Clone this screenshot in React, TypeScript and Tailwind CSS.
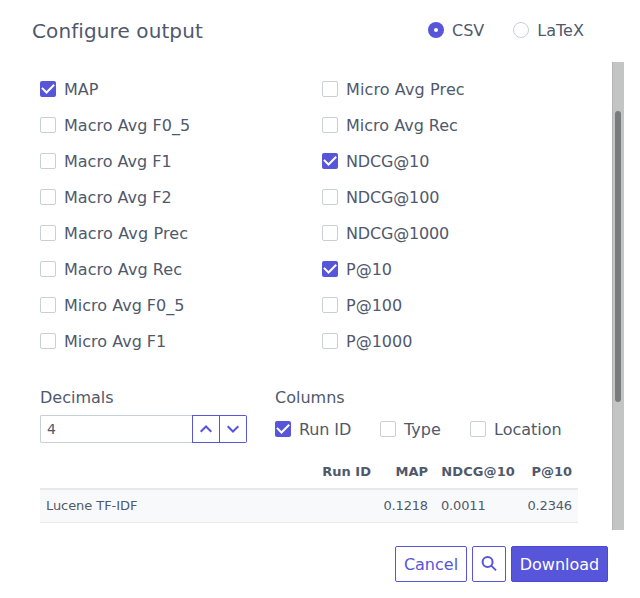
import React from 'react';

type Option = { label: string; checked?: boolean; tracking?: string };

const leftMetrics: Option[] = [
  { label: 'MAP', checked: true },
  { label: 'Macro Avg F0_5', tracking: 'tracking-[0.03px]' },
  { label: 'Macro Avg F1' },
  { label: 'Macro Avg F2' },
  { label: 'Macro Avg Prec', tracking: 'tracking-[0.12px]' },
  { label: 'Macro Avg Rec', tracking: 'tracking-[0.06px]' },
  { label: 'Micro Avg F0_5' },
  { label: 'Micro Avg F1' },
];

const rightMetrics: Option[] = [
  { label: 'Micro Avg Prec', tracking: 'tracking-[0.12px]' },
  { label: 'Micro Avg Rec' },
  { label: 'NDCG@10', checked: true, tracking: 'tracking-[-0.15px]' },
  { label: 'NDCG@100', tracking: 'tracking-[-0.15px]' },
  { label: 'NDCG@1000', tracking: 'tracking-[-0.18px]' },
  { label: 'P@10', checked: true },
  { label: 'P@100' },
  { label: 'P@1000' },
];

function Checkbox({ label, checked, tracking = '' }: Option) {
  return (
    <label className="flex h-6 items-center gap-2 whitespace-nowrap">
      <span
        className={
          checked
            ? 'flex size-4 shrink-0 rounded-[2px] bg-[#5755d9]'
            : 'flex size-4 shrink-0 rounded-[2px] border border-[#caced7] bg-white'
        }
      >
        {checked && (
          <svg className="size-4" viewBox="0 0 16 16" fill="none" stroke="#fff" strokeWidth="2">
            <path d="M1.9 6.9 L6.5 11.5 L14.2 3.8" />
          </svg>
        )}
      </span>
      <span className={`pt-[2px] ${tracking}`}>{label}</span>
    </label>
  );
}

function Radio({ label, checked }: Option) {
  return (
    <label className="flex h-6 items-center gap-2">
      <span
        className={
          checked
            ? 'flex size-4 items-center justify-center rounded-full bg-[#5755d9]'
            : 'flex size-4 rounded-full border border-[#caced7]'
        }
      >
        {checked && <span className="size-1 rounded-full bg-white" />}
      </span>
      <span className="pt-[2px]">{label}</span>
    </label>
  );
}

function Chevron({ d }: { d: string }) {
  return (
    <svg className="size-4" viewBox="0 0 16 16" fill="none" stroke="#5755d9" strokeWidth="2">
      <path d={d} />
    </svg>
  );
}

export default function App() {
  return (
    <div className="flex h-[598px] w-[640px] flex-col bg-white font-['DejaVu_Sans',sans-serif] text-base leading-6 text-[#50596c]">
      <header className="flex h-[62px] shrink-0 items-center pl-8">
        <h1 className="w-[396px] text-xl tracking-[0.1px]">Configure output</h1>
        <div className="flex gap-[29px] pb-[2px]">
          <Radio label="CSV" checked />
          <Radio label="LaTeX" />
        </div>
      </header>

      <div className="flex h-[468px] shrink-0 overflow-hidden">
        <main className="w-[612px] pl-10 pt-[15px]">
          <div className="flex">
            <div className="flex w-[282px] flex-col gap-3">
              {leftMetrics.map((m) => (
                <Checkbox key={m.label} {...m} />
              ))}
            </div>
            <div className="flex flex-col gap-3">
              {rightMetrics.map((m) => (
                <Checkbox key={m.label} {...m} />
              ))}
            </div>
          </div>

          <div className="mt-8 flex">
            <div className="w-[235px]">
              <div className="h-[30px] pt-px">Decimals</div>
              <div className="flex h-7 w-[207px]">
                <div className="flex flex-1 items-center rounded-l-[2px] border border-r-0 border-[#caced7] pl-[6px] text-sm">
                  4
                </div>
                <button className="flex w-7 items-center justify-center border border-[#5755d9]">
                  <Chevron d="M2.7 10.8 L8 5.5 L13.3 10.8" />
                </button>
                <button className="flex w-[27px] items-center justify-center rounded-r-[2px] border border-l-0 border-[#5755d9]">
                  <Chevron d="M2.7 5.2 L8 10.5 L13.3 5.2" />
                </button>
              </div>
            </div>
            <div>
              <div className="h-8 pt-px">Columns</div>
              <div className="flex">
                <div className="w-[105px]"><Checkbox label="Run ID" checked tracking="tracking-[-0.1px]" /></div>
                <div className="w-[90px]"><Checkbox label="Type" /></div>
                <Checkbox label="Location" />
              </div>
            </div>
          </div>

          <table className="mt-[11px] w-[538px] table-fixed border-collapse text-[13px] leading-5">
            <colgroup>
              <col className="w-[337px]" />
              <col className="w-[57px]" />
              <col className="w-[87px]" />
              <col className="w-[57px]" />
            </colgroup>
            <thead>
              <tr className="h-[35px] border-b-2 border-[#e7e9ed] text-right">
                <th className="px-[6px] pt-[2px]">Run ID</th>
                <th className="px-[6px] pt-[2px]">MAP</th>
                <th className="px-[6px] pt-[2px] tracking-[0.1px]">NDCG@10</th>
                <th className="px-[6px] pt-[2px]">P@10</th>
              </tr>
            </thead>
            <tbody>
              <tr className="h-[33px] border-b border-[#e7e9ed] bg-[#f8f9fa]">
                <td className="px-[6px] pt-px tracking-[-0.07px]">Lucene TF-IDF</td>
                <td className="px-[6px] pt-px text-right tracking-[-0.15px]">0.1218</td>
                <td className="px-[7px] pt-px tracking-[-0.15px]">0.0011</td>
                <td className="px-[6px] pt-px text-right tracking-[-0.15px]">0.2346</td>
              </tr>
            </tbody>
          </table>
        </main>
        <div className="w-3 border-l border-[#b2b4b3] bg-[#c3c5c4] pl-[2px] pt-[49px]">
          <div className="h-[291px] w-[6px] rounded-full bg-[#787c7d]" />
        </div>
      </div>

      <footer className="flex flex-1 items-start justify-end gap-[5px] pr-8 pt-4">
        <button className="h-9 w-[72px] rounded-[2px] border border-[#5755d9] pt-[2px] text-[#5755d9]">Cancel</button>
        <button className="flex h-9 w-[34px] items-center justify-center rounded-[2px] border border-[#5755d9]">
          <svg className="size-4" viewBox="0 0 16 16" fill="none" stroke="#5755d9" strokeWidth="2">
            <circle cx="6.6" cy="6" r="5" />
            <path d="M10 9.4 L15 14.4" />
          </svg>
        </button>
        <button className="h-9 w-[97px] rounded-[2px] border border-[#4b48d6] bg-[#5755d9] pt-[2px] text-white">Download</button>
      </footer>
    </div>
  );
}
